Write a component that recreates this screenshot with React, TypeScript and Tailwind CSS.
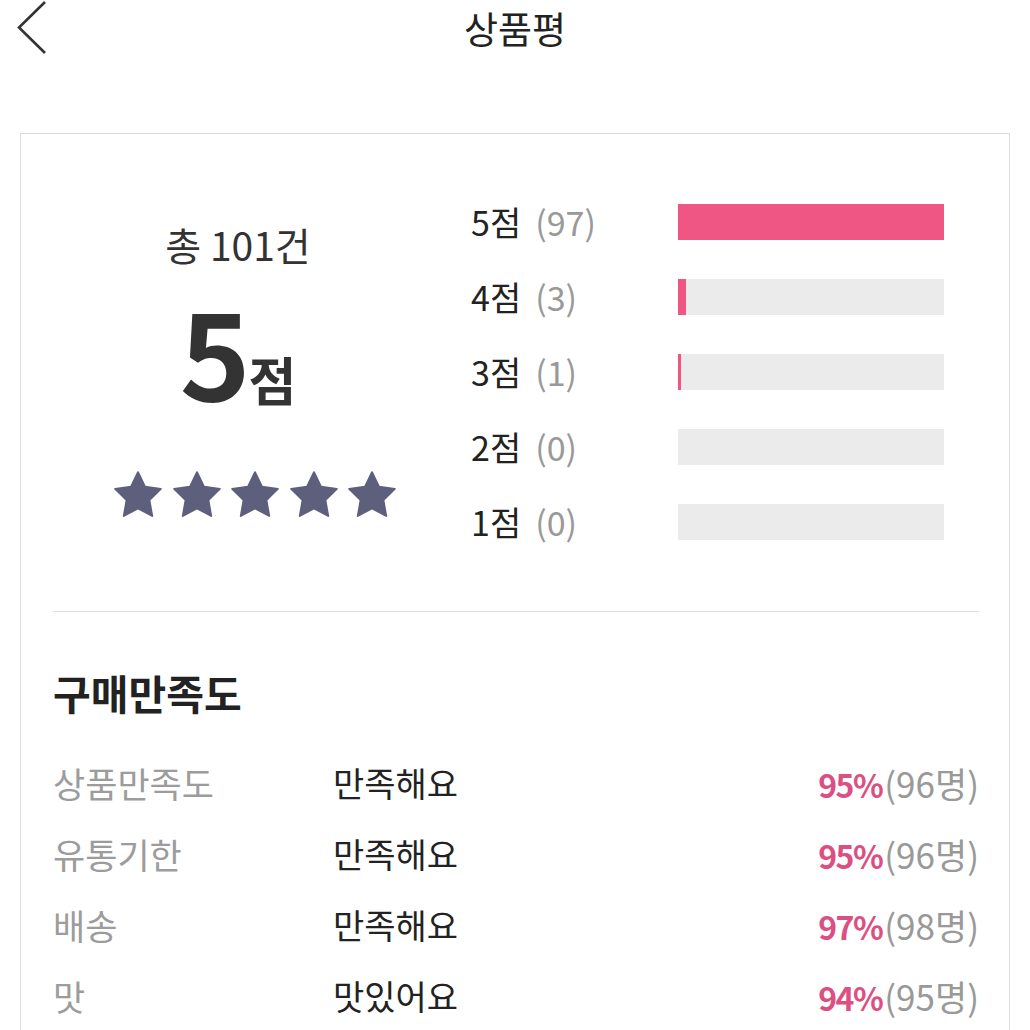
const ratings = [
  { score: 5, count: 97 },
  { score: 4, count: 3 },
  { score: 3, count: 1 },
  { score: 2, count: 0 },
  { score: 1, count: 0 },
];

const satisfaction = [
  { label: '상품만족도', value: '만족해요', pct: '95%', people: '(96명)' },
  { label: '유통기한', value: '만족해요', pct: '95%', people: '(96명)' },
  { label: '배송', value: '만족해요', pct: '97%', people: '(98명)' },
  { label: '맛', value: '맛있어요', pct: '94%', people: '(95명)' },
];

const BAR_WIDTH = 266;
const maxCount = Math.max(...ratings.map((r) => r.count));

const Star = () => (
  <svg width="56" height="56" viewBox="0 0 24 24" className="text-[#5d5f7c]">
    <path
      fill="currentColor"
      stroke="currentColor"
      strokeWidth="0.8"
      strokeLinejoin="round"
      d="M12 2.2l3 6.2 6.8 1-4.9 4.8 1.2 6.8L12 17.8 5.9 21l1.2-6.8L2.2 9.4l6.8-1z"
    />
  </svg>
);

export default function App() {
  return (
    <div className="w-[1030px] min-h-[1030px] bg-white font-['Noto_Sans_CJK_KR','Noto_Sans',sans-serif] text-[#222] overflow-hidden">
      {/* Header */}
      <div className="relative h-[56px] flex items-center justify-center">
        <svg
          className="absolute left-[14px] top-0"
          width="40"
          height="58"
          viewBox="0 0 40 58"
          fill="none"
        >
          <path d="M31 2 L5 27.5 L31 53" stroke="#333" strokeWidth="2.6" />
        </svg>
        <h1 className="text-[37px] leading-none font-normal text-[#222]">상품평</h1>
      </div>

      {/* Card */}
      <div className="mt-[77px] mx-[20px] border border-[#dcdcdc] pl-[32px] pr-[30px]">
        {/* Rating summary */}
        <div className="flex pt-[50px] pb-[52px]">
          <div className="w-[370px] flex flex-col items-center">
            <div className="mt-[41px] text-[39px] leading-none text-[#333]">총 101건</div>
            <div className="mt-[25px] flex items-baseline leading-none text-[#333] font-bold">
              <span className="text-[120px] leading-none tracking-[-2px]">5</span>
              <span className="text-[52px] leading-none">점</span>
            </div>
            <div className="mt-[58px] ml-[34px] flex gap-[2.5px]">
              {[0, 1, 2, 3, 4].map((i) => (
                <Star key={i} />
              ))}
            </div>
          </div>

          <div className="ml-[48px] flex flex-col">
            {ratings.map((r) => (
              <div key={r.score} className="h-[75px] flex items-center">
                <div className="w-[207px] flex items-center text-[34px] leading-none">
                  <span className="text-[#222]">{r.score}점</span>
                  <span className="ml-[14px] text-[#999]">({r.count})</span>
                </div>
                <div className="w-[266px] h-[36px] bg-[#ebebeb]">
                  <div
                    className="h-full bg-[#ef5684]"
                    style={{
                      width: r.count ? Math.max(3, (r.count / maxCount) * BAR_WIDTH) : 0,
                    }}
                  />
                </div>
              </div>
            ))}
          </div>
        </div>

        {/* Purchase satisfaction */}
        <div className="border-t border-[#e2e2e2] pt-[55px]">
          <h2 className="text-[41px] leading-[50px] font-bold text-[#222]">구매만족도</h2>
          <div className="mt-[30px]">
            {satisfaction.map((s) => (
              <div key={s.label} className="h-[71px] flex items-center text-[34px] leading-none">
                <div className="w-[280px] text-[35px] text-[#9c9c9c]">{s.label}</div>
                <div className="text-[#222]">{s.value}</div>
                <div className="flex-1 text-right">
                  <span className="text-[32px] font-bold text-[#dc4f82] tracking-[-1.5px]">{s.pct}</span>
                  <span className="ml-[2px] text-[35px] text-[#999]">{s.people}</span>
                </div>
              </div>
            ))}
          </div>
        </div>
      </div>
    </div>
  );
}
